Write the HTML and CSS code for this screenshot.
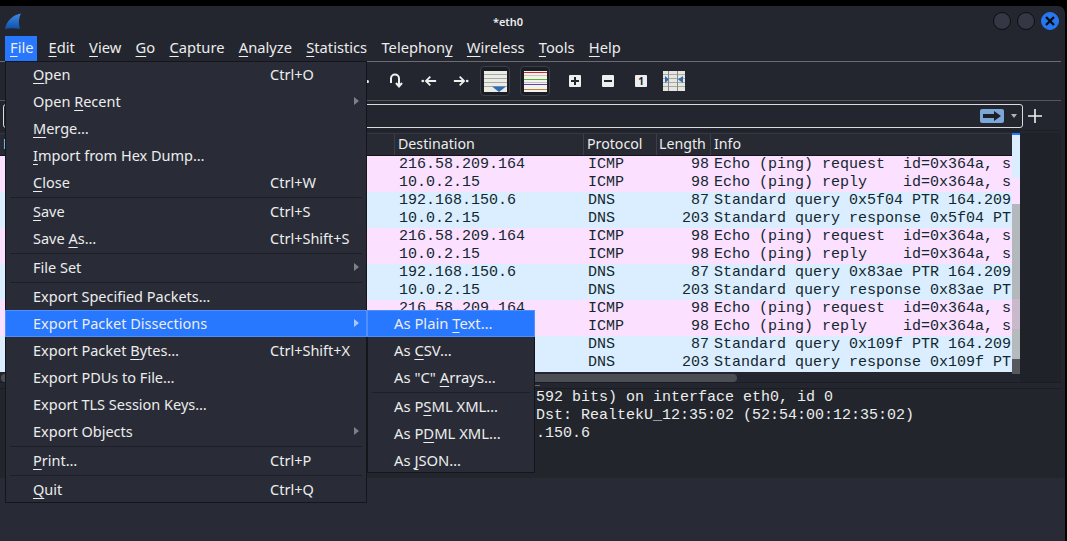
FILE: index.html
```html
<!DOCTYPE html>
<html lang="en">
<head>
  <meta charset="UTF-8" />
  <title>*eth0</title>
  <link rel="stylesheet" href="styles.css">
</head>
<body>
  <div class="window">
    <div class="titlebar">
      <svg class="logo" width="18" height="18" viewBox="0 0 18 18">
        <defs>
          <linearGradient id="fin" x1="0" y1="0" x2="0" y2="1">
            <stop offset="0" stop-color="#3f8be6"/>
            <stop offset="1" stop-color="#0f4fa8"/>
          </linearGradient>
        </defs>
        <path d="M0 16 C1.5 8 8 1.500 16 0.500 C13.500 5 13.500 11 15 16 C10 15 5 15 0 16 Z" fill="url(#fin)"/>
      </svg>
      <div class="title">*eth0</div>
      <div class="win-buttons">
        <span class="win-btn"></span>
        <span class="win-btn"></span>
        <span class="win-btn close">
          <svg width="10" height="10" viewBox="0 0 10 10"><path d="M1 1 L9 9 M9 1 L1 9" stroke="#0b0d12" stroke-width="2.400"/></svg>
        </span>
      </div>
    </div>

    <div class="menubar">
      <span class="top-item open"><u>F</u>ile</span>
      <span class="top-item"><u>E</u>dit</span>
      <span class="top-item"><u>V</u>iew</span>
      <span class="top-item"><u>G</u>o</span>
      <span class="top-item"><u>C</u>apture</span>
      <span class="top-item"><u>A</u>nalyze</span>
      <span class="top-item"><u>S</u>tatistics</span>
      <span class="top-item">Telephon<u>y</u></span>
      <span class="top-item"><u>W</u>ireless</span>
      <span class="top-item"><u>T</u>ools</span>
      <span class="top-item"><u>H</u>elp</span>
    </div>

    <div class="toolbar">
      <span class="tool-dot"></span>
      <span class="tool">
        <svg width="16" height="16" viewBox="0 0 16 16" fill="none" stroke="#f0f0f0" stroke-width="2"><path d="M3 10 V5.500 A4 4 0 0 1 11 5.500 V12"/><path d="M8 10 L11 13.500 L14 10"/></svg>
      </span>
      <span class="tool">
        <svg width="18" height="16" viewBox="0 0 18 16" fill="none" stroke="#f0f0f0" stroke-width="2"><circle cx="2" cy="8" r="1.500" fill="#f0f0f0" stroke="none"/><path d="M17 8 H6 M10.500 3 L5.500 8 L10.500 13"/></svg>
      </span>
      <span class="tool last-arrow">
        <svg width="18" height="16" viewBox="0 0 18 16" fill="none" stroke="#f0f0f0" stroke-width="2"><circle cx="16" cy="8" r="1.500" fill="#f0f0f0" stroke="none"/><path d="M1 8 H12 M7.500 3 L12.500 8 L7.500 13"/></svg>
      </span>
      <span class="tool-box">
        <svg width="23" height="21" viewBox="0 0 23 21">
          <rect width="23" height="21" fill="#ecece6"/>
          <path d="M0 3.500 H23 M0 7.500 H23 M0 11.500 H23 M0 15.500 H23" stroke="#a9aca6"/>
          <path d="M8 15.500 H22 L15 21 Z" fill="#2f6cb3"/>
        </svg>
      </span>
      <span class="tool-box">
        <svg width="23" height="21" viewBox="0 0 23 21">
          <rect width="23" height="21" fill="#f2f2ee"/>
          <path d="M0 1.500 H23" stroke="#d8262c"/>
          <path d="M0 4.500 H23" stroke="#c4c4c0"/>
          <path d="M0 8.500 H23" stroke="#62b02c"/>
          <path d="M0 11.500 H23" stroke="#c4c4c0"/>
          <path d="M0 13.500 H23" stroke="#5a45b8"/>
          <path d="M0 18.500 H23" stroke="#b8862c"/>
        </svg>
      </span>
      <span class="zoom-btn">
        <svg width="8" height="8" viewBox="0 0 8 8"><path d="M0 4 H8 M4 0 V8" stroke="#23262e" stroke-width="2"/></svg>
      </span>
      <span class="zoom-btn">
        <svg width="8" height="8" viewBox="0 0 8 8"><path d="M0 4 H8" stroke="#23262e" stroke-width="2"/></svg>
      </span>
      <span class="zoom-btn one">1</span>
      <span class="tool resize">
        <svg width="22" height="20" viewBox="0 0 22 20">
          <rect width="22" height="20" fill="#e6e6e0"/>
          <path d="M0 3.500 H22 M0 7.500 H22 M0 11.500 H22 M0 15.500 H22" stroke="#a9aca6"/>
          <path d="M5.500 0 V20 M14.500 0 V20" stroke="#85888a"/>
          <path d="M2 5 V12 L6 8.500 Z M20 5 V12 L15 8.500 Z" fill="#2f6cb3"/>
        </svg>
      </span>
    </div>

    <div class="filterbar">
      <div class="filter-input">
        <span class="apply-btn">
          <svg width="18" height="10" viewBox="0 0 18 10"><path d="M0 3 H11 V0 L18 5 L11 10 V7 H0 Z" fill="#1d2027"/></svg>
        </span>
        <span class="caret"></span>
      </div>
      <svg class="add-filter" width="14" height="14" viewBox="0 0 14 14"><path d="M0 7 H14 M7 0 V14" stroke="#f0f0f0" stroke-width="1.600"/></svg>
    </div>

    <div class="packets">
      <div class="packet-list">
        <div class="packet-head">
          <div class="head-cell col-left">No.</div>
          <div class="head-cell col-dst">Destination</div>
          <div class="head-cell col-proto">Protocol</div>
          <div class="head-cell col-len">Length</div>
          <div class="head-cell col-info">Info</div>
        </div>
        <div class="row icmp"><span class="col-left"></span><span class="col-dst">216.58.209.164</span><span class="col-proto">ICMP</span><span class="col-len">98</span><span class="col-info">Echo (ping) request  id=0x364a, s</span></div>
        <div class="row icmp"><span class="col-left"></span><span class="col-dst">10.0.2.15</span><span class="col-proto">ICMP</span><span class="col-len">98</span><span class="col-info">Echo (ping) reply    id=0x364a, s</span></div>
        <div class="row dns"><span class="col-left"></span><span class="col-dst">192.168.150.6</span><span class="col-proto">DNS</span><span class="col-len">87</span><span class="col-info">Standard query 0x5f04 PTR 164.209</span></div>
        <div class="row dns"><span class="col-left"></span><span class="col-dst">10.0.2.15</span><span class="col-proto">DNS</span><span class="col-len">203</span><span class="col-info">Standard query response 0x5f04 PT</span></div>
        <div class="row icmp"><span class="col-left"></span><span class="col-dst">216.58.209.164</span><span class="col-proto">ICMP</span><span class="col-len">98</span><span class="col-info">Echo (ping) request  id=0x364a, s</span></div>
        <div class="row icmp"><span class="col-left"></span><span class="col-dst">10.0.2.15</span><span class="col-proto">ICMP</span><span class="col-len">98</span><span class="col-info">Echo (ping) reply    id=0x364a, s</span></div>
        <div class="row dns"><span class="col-left"></span><span class="col-dst">192.168.150.6</span><span class="col-proto">DNS</span><span class="col-len">87</span><span class="col-info">Standard query 0x83ae PTR 164.209</span></div>
        <div class="row dns"><span class="col-left"></span><span class="col-dst">10.0.2.15</span><span class="col-proto">DNS</span><span class="col-len">203</span><span class="col-info">Standard query response 0x83ae PT</span></div>
        <div class="row icmp"><span class="col-left"></span><span class="col-dst">216.58.209.164</span><span class="col-proto">ICMP</span><span class="col-len">98</span><span class="col-info">Echo (ping) request  id=0x364a, s</span></div>
        <div class="row icmp"><span class="col-left"></span><span class="col-dst"></span><span class="col-proto">ICMP</span><span class="col-len">98</span><span class="col-info">Echo (ping) reply    id=0x364a, s</span></div>
        <div class="row dns"><span class="col-left"></span><span class="col-dst"></span><span class="col-proto">DNS</span><span class="col-len">87</span><span class="col-info">Standard query 0x109f PTR 164.209</span></div>
        <div class="row dns"><span class="col-left"></span><span class="col-dst"></span><span class="col-proto">DNS</span><span class="col-len">203</span><span class="col-info">Standard query response 0x109f PT</span></div>
        <div class="hscroll"><div class="hscroll-handle"></div></div>
      </div>
      <div class="vscroll"></div>
      <div class="packets-side"></div>
    </div>

    <div class="splitter"><span class="grip"></span></div>

    <div class="details">
      <div class="detail-line">592 bits) on interface eth0, id 0</div>
      <div class="detail-line">Dst: RealtekU_12:35:02 (52:54:00:12:35:02)</div>
      <div class="detail-line">.150.6</div>
    </div>
    <div class="bytes-pane"></div>
  </div>

  <div class="menu file-menu">
    <div class="item first"><span class="label"><u>O</u>pen</span><span>Ctrl+O</span></div>
    <div class="item"><span class="label">Open <u>R</u>ecent</span><i class="arrow"></i></div>
    <div class="item"><span class="label"><u>M</u>erge…</span></div>
    <div class="item"><span class="label"><u>I</u>mport from Hex Dump…</span></div>
    <div class="item"><span class="label"><u>C</u>lose</span><span>Ctrl+W</span></div>
    <div class="sep"></div>
    <div class="item"><span class="label"><u>S</u>ave</span><span>Ctrl+S</span></div>
    <div class="item"><span class="label">Save <u>A</u>s…</span><span>Ctrl+Shift+S</span></div>
    <div class="sep"></div>
    <div class="item"><span class="label">File Set</span><i class="arrow"></i></div>
    <div class="sep"></div>
    <div class="item"><span class="label">Export Specified Packets…</span></div>
    <div class="item active"><span class="label">Export Packet Dissections</span><i class="arrow"></i></div>
    <div class="item"><span class="label">Export Packet <u>B</u>ytes…</span><span>Ctrl+Shift+X</span></div>
    <div class="item"><span class="label">Export PDUs to File…</span></div>
    <div class="item"><span class="label">Export TLS Session Keys…</span></div>
    <div class="item"><span class="label">Export Objects</span><i class="arrow"></i></div>
    <div class="sep"></div>
    <div class="item"><span class="label"><u>P</u>rint…</span><span>Ctrl+P</span></div>
    <div class="sep"></div>
    <div class="item last"><span class="label"><u>Q</u>uit</span><span>Ctrl+Q</span></div>
  </div>

  <div class="menu sub-menu">
    <div class="item active"><span>As Plain <u>T</u>ext…</span></div>
    <div class="item"><span>As <u>C</u>SV…</span></div>
    <div class="item"><span>As "C" <u>A</u>rrays…</span></div>
    <div class="sep"></div>
    <div class="item"><span>As P<u>S</u>ML XML…</span></div>
    <div class="item"><span>As P<u>D</u>ML XML…</span></div>
    <div class="item"><span>As <u>J</u>SON…</span></div>
  </div>
</body>
</html>
```

FILE: styles.css
```css
* {
  box-sizing: border-box;
}

body {
  margin: 0;
  padding: 6px 2px 0 0;
  height: 541px;
  overflow: hidden;
  background-color: #000;
  color: #eceded;
  font-family: "Noto Sans", sans-serif;
  font-size: 14.5px;
}

u {
  text-decoration-thickness: 1px;
  text-underline-offset: 3px;
  text-decoration-skip-ink: none;
}

.window {
  height: 535px;
  display: flex;
  flex-direction: column;
  background-color: #23262e;
  border-radius: 0 7px 0 0;
}

.titlebar {
  height: 30px;
  flex: none;
  display: flex;
  align-items: center;
  padding: 0 6px 0 5px;
}

.logo {
  flex: none;
  margin-top: 1px;
}

.title {
  flex: 1;
  text-align: center;
  font-size: 11px;
  font-weight: 600;
}

.win-buttons {
  display: flex;
  gap: 6px;
}

.win-btn {
  width: 18px;
  height: 18px;
  border-radius: 50%;
  background-color: #343844;
  border: 1px solid #0d0e12;
  display: flex;
  align-items: center;
  justify-content: center;
}

.win-btn.close {
  background-color: #2777f0;
  border-color: #2777f0;
}

.menubar {
  height: 26px;
  flex: none;
  display: flex;
  align-items: flex-start;
  gap: 14.3px;
  padding-left: 10px;
  margin-right: 4px;
  border-bottom: 1px solid #6a6c70;
  font-size: 14.7px;
  line-height: 23px;
}

.top-item.open {
  margin: 0 -2.300px 0 -5px;
  padding: 0 3px 0 5px;
  height: 25px;
  background-color: #2777ff;
}

.toolbar {
  height: 39px;
  flex: none;
  display: flex;
  align-items: center;
  padding-left: 366px;
  margin-right: 4px;
  border-bottom: 1px solid #55575c;
}

.tool-dot {
  width: 3px;
  height: 3px;
  margin-right: 19px;
  border-radius: 50%;
  background-color: #f0f0f0;
}

.tool {
  width: 16px;
  height: 20px;
  margin-right: 16.5px;
  display: flex;
  align-items: center;
  justify-content: center;
}

.tool.last-arrow {
  margin-right: 11px;
}

.tool.resize {
  width: 22px;
  margin: 0;
}

.tool-box {
  width: 30px;
  height: 30px;
  margin-right: 10px;
  border: 1px solid #3c3f48;
  border-radius: 4px;
  background-color: #1b1e24;
  display: flex;
  align-items: center;
  justify-content: center;
}

.zoom-btn {
  width: 12px;
  height: 12px;
  margin-right: 21px;
  border-radius: 1px;
  background-color: #eeeeee;
  color: #23262e;
  display: flex;
  align-items: center;
  justify-content: center;
}

.tool-box + .zoom-btn {
  margin-left: 9px;
}

.zoom-btn.one {
  font-size: 10px;
  font-weight: 700;
  margin-right: 16px;
}

.filterbar {
  height: 29px;
  flex: none;
  display: flex;
  align-items: center;
  gap: 5px;
  padding: 0 0 0 3px;
}

.filter-input {
  width: 1020px;
  height: 24px;
  margin-top: 1px;
  display: flex;
  align-items: center;
  justify-content: flex-end;
  padding-right: 4px;
  border: 1px solid #dcdcdc;
  border-radius: 3px;
}

.apply-btn {
  width: 24px;
  height: 14px;
  margin-right: 7px;
  border-radius: 2px;
  background-color: #7ca8d8;
  display: flex;
  align-items: center;
  justify-content: center;
}

.caret {
  width: 0;
  height: 0;
  border-left: 3px solid transparent;
  border-right: 3px solid transparent;
  border-top: 4px solid #b5b5b5;
  margin-right: 1px;
}

.add-filter {
  flex: none;
}

.packets {
  height: 253px;
  flex: none;
  display: flex;
  margin-right: 4px;
  padding-top: 2px;
  border-top: 1px solid #1e2027;
  border-bottom: 1px solid #1b1d23;
}

.packet-list {
  width: 1012px;
  flex: none;
}

.packet-head {
  height: 23px;
  display: flex;
  background-color: #272a32;
  border-top: 1px solid #34373f;
  border-bottom: 1px solid #14161a;
  font-size: 14.2px;
}

.head-cell {
  line-height: 19px;
  border-right: 1px solid #3b3e46;
  padding-left: 3px;
}

.head-cell.col-len {
  padding-left: 2px;
}

.head-cell.col-info {
  border-right: none;
}

.col-left {
  width: 395px;
  flex: none;
}

.col-dst {
  width: 189px;
  flex: none;
}

.col-proto {
  width: 73px;
  flex: none;
}

.col-len {
  width: 54px;
  flex: none;
}

.col-info {
  flex: 1;
  overflow: hidden;
}

.row {
  height: 18px;
  display: flex;
  font-family: "Liberation Mono", monospace;
  font-size: 15px;
  line-height: 18px;
  color: #12272e;
  white-space: pre;
}

.row .col-dst {
  padding-left: 4px;
}

.row .col-proto {
  padding-left: 4px;
}

.row .col-len {
  text-align: right;
  padding-right: 2px;
}

.row .col-info {
  padding-left: 3px;
}

.icmp {
  background-color: #fce0ff;
}

.dns {
  background-color: #daeeff;
}

.hscroll {
  height: 11px;
  padding: 2px 0;
}

.hscroll-handle {
  width: 736px;
  height: 8px;
  margin-left: 1px;
  border-radius: 4px;
  background-color: #4b4e55;
}

.vscroll {
  width: 8px;
  height: 241px;
  flex: none;
  background: linear-gradient(
    #2777ff 0, #2777ff 2px,
    #daeeff 2px, #daeeff 45px,
    #fce0ff 45px, #fce0ff 71px,
    #b3b8bc 71px, #b3b8bc 166px,
    #c9bacb 166px, #c9bacb 196px,
    #b5babd 196px, #b5babd 226px,
    #55585c 226px, #55585c 241px
  );
}

.packets-side {
  flex: 1;
  background-color: #1f2229;
}

.splitter {
  height: 5px;
  flex: none;
  padding-left: 535px;
}

.grip {
  display: block;
  width: 5px;
  height: 1px;
  margin-top: 2px;
  background-color: #6a6c70;
}

.details {
  height: 90px;
  flex: none;
  margin-right: 4px;
  padding-left: 536px;
  border-top: 1px solid #1b1d23;
  background-color: #22252c;
  font-family: "Liberation Mono", monospace;
  font-size: 15px;
  line-height: 18px;
}

.detail-line {
  white-space: pre;
}

.bytes-pane {
  flex: 1;
  background-color: #282b35;
}

.menu {
  position: absolute;
  background-color: #292c36;
  border: 1px solid #14161b;
}

.file-menu {
  left: 5px;
  top: 61px;
  width: 362px;
  height: 442px;
}

.sub-menu {
  left: 367px;
  top: 310px;
  width: 168px;
  height: 163px;
  font-size: 14.8px;
}

.item {
  height: 27px;
  display: flex;
  align-items: center;
  padding-left: 27px;
  padding-bottom: 2px;
  white-space: nowrap;
}

.sub-menu .item {
  padding-left: 26px;
}

.sub-menu .item.active {
  margin-top: -1px;
  padding-left: 27px;
}

.item.first {
  height: 26px;
  padding-bottom: 3px;
}

.item.last {
  height: 26px;
  padding-bottom: 1px;
}

.label {
  width: 237px;
  flex: none;
}

.arrow {
  width: 0;
  height: 0;
  margin-left: 84px;
  border-top: 4px solid transparent;
  border-bottom: 4px solid transparent;
  border-left: 5px solid #7d8087;
}

.item.active {
  margin-left: -1px;
  margin-right: -1px;
  padding-left: 28px;
  background-color: #2777ff;
  box-shadow: inset 0 0 0 1px #4f8fff;
}

.item.active .arrow {
  border-left-color: #a9c8ff;
}

.sep {
  height: 2px;
  margin: 0 4px;
  border-bottom: 1px solid #1d1f26;
}
```
